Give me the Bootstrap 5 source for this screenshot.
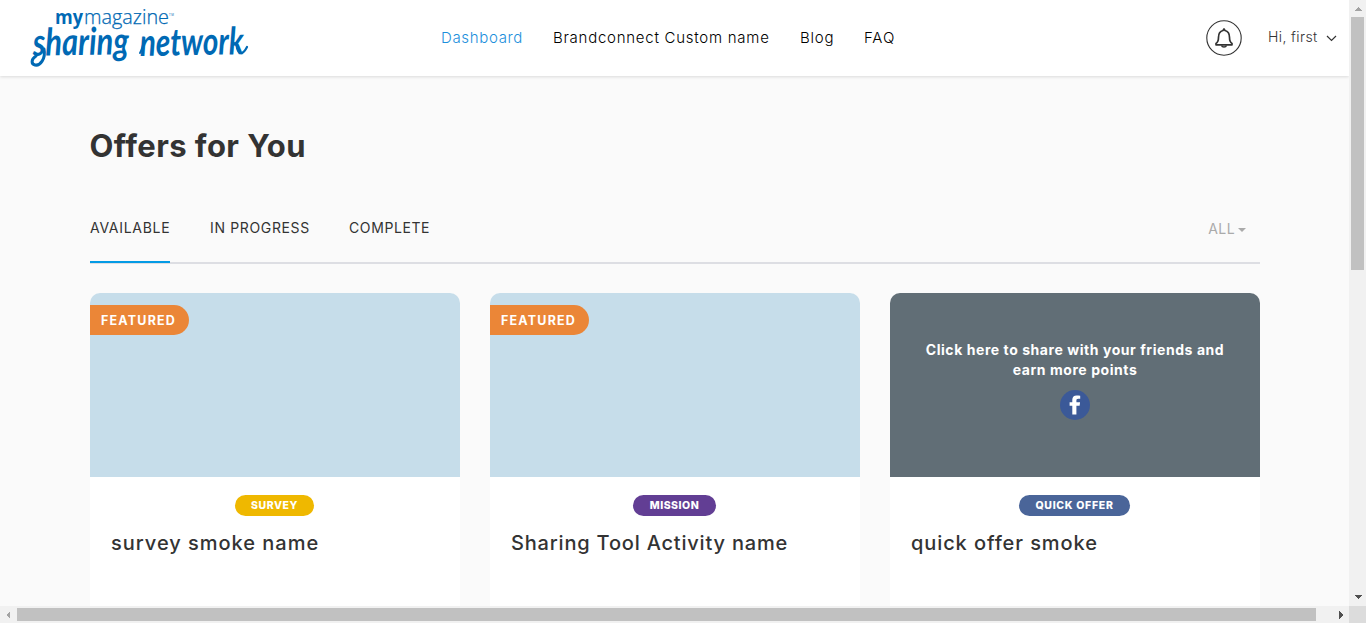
<!DOCTYPE html>
<html lang="en">
<head>
<meta charset="utf-8">
<meta name="viewport" content="width=device-width, initial-scale=1">
<title>Sharing Network</title>
<link href="https://cdn.jsdelivr.net/npm/bootstrap@5.3.0/dist/css/bootstrap.min.css" rel="stylesheet">
<style>
body { font-family: Inter, "Open Sans", sans-serif; color: #333; }
a { color: inherit; text-decoration: none; }
.window-grid { display: grid; grid-template: 606px 17px / 1349px 17px; width: 1366px; height: 623px; overflow: hidden; }
.page { background: #fafafa; }
.topbar { height: 76px; padding: 0; box-shadow: 0 1px 3px rgba(0,0,0,.13); z-index: 1; }
.logo { margin-left: 24px; width: 230px; height: 76px; }
.main-nav { margin-left: 187px; font-size: 15px; font-weight: 300; color: #000; line-height: 20px; }
.main-nav a { white-space: nowrap; }
.n1 { width: 112px; letter-spacing: .66px; color: #1c8fdc; }
.n2 { width: 247px; letter-spacing: .74px; }
.n3 { width: 64px; letter-spacing: .75px; }
.n4 { width: 40px; letter-spacing: .9px; }
.bell { margin-left: 302px; }
.user { margin-left: 26px; font-size: 14px; font-weight: 300; letter-spacing: .4px; line-height: 20px; width: 58px; white-space: nowrap; margin-top: -2px; }
.wrap { width: 1170px; margin-left: 90px; }
h1 { font-size: 31px; font-weight: 700; line-height: 40px; margin: 50px 0 0 -.5px; letter-spacing: .42px; }
.tabs { margin-top: 42px; height: 56px; border-bottom: 2px solid #dddee3; font-size: 14px; line-height: 20px; }
.tab { height: 55px; padding-top: 10px; white-space: nowrap; margin-right: 40px; }
.tab.active { border-bottom: 2px solid #039be5; width: 80px; letter-spacing: .72px; }
.progress-tab { width: 99px; letter-spacing: .65px; }
.complete-tab { letter-spacing: .6px; }
.filter { margin: 11px 14px 0 auto; color: #aaa; letter-spacing: .4px; }
.filter::after { content: ""; display: inline-block; border: 4px solid transparent; border-top-color: #aaa; border-bottom: 0; margin-left: 3px; vertical-align: 2px; }
.offers { display: grid; grid-template-columns: repeat(3, 370px); gap: 30px; margin-top: 29px; }
.offer { height: 313px; background: #fff; border-radius: 10px 10px 0 0; overflow: hidden; }
.cover { height: 184px; background: #c6ddea; padding-top: 12px; }
.cover.share { background: #616e76; color: #fff; padding-top: 47px; font-size: 14px; font-weight: 700; line-height: 20px; letter-spacing: .56px; }
.share-icon { margin-top: 10px; }
.featured { display: block; width: 99px; height: 30px; line-height: 31px; padding-left: 11px; background: #eb8637; color: #fff; border-radius: 0 15px 15px 0; font-size: 12.5px; font-weight: 700; letter-spacing: 1.2px; }
.kind { display: block; height: 21px; line-height: 21px; margin: 18px auto 0; border-radius: 11px; color: #fff; font-size: 10.5px; font-weight: 800; text-align: center; position: relative; left: -.5px; }
.survey { background: #efb800; width: 79px; letter-spacing: .55px; }
.mission { background: #623e94; width: 83px; letter-spacing: .5px; }
.quick { background: #4a6599; width: 111px; letter-spacing: .7px; }
.offer h2 { font-size: 20px; font-weight: 500; line-height: 26px; margin: 14px 0 0 21px; white-space: nowrap; }
.t1 { letter-spacing: .98px; }
.t2 { letter-spacing: .81px; }
.t3 { letter-spacing: .91px; }
.bars { background: #f1f1f1; }
.thumb-bar { fill: #c1c1c1; }
.corner { background: #dcdcdc; }
</style>
</head>
<body>
<div class="window-grid">
  <div class="page overflow-hidden">
    <header class="topbar bg-white d-flex align-items-center position-relative">
      <svg class="logo" viewBox="24 0 230 76" fill="#0069b4">
        <g font-family="Open Sans, sans-serif" font-size="19.500">
          <text x="55" y="23.500" font-weight="700" textLength="28" lengthAdjust="spacingAndGlyphs">my</text>
          <text x="84" y="23.500" font-weight="300" stroke="#0069b4" stroke-width=".25" textLength="85" lengthAdjust="spacingAndGlyphs">magazine</text>
          <text x="169" y="15.500" font-size="3" textLength="5">TM</text>
        </g>
        <g font-family="Lato, sans-serif" font-style="italic" font-weight="700" font-size="38">
          <text x="33" y="55" textLength="96" lengthAdjust="spacingAndGlyphs" transform="rotate(-1 80 54)">sharing</text>
          <text x="140" y="55" textLength="104" lengthAdjust="spacingAndGlyphs" transform="rotate(-1 195 54)">network</text>
        </g>
        <g fill="none" stroke="#0069b4" stroke-width="3" stroke-linecap="round">
          <path d="M44 49c2 10-4 17-9 16-4-1-4-6 1-9"/>
          <path d="M237 48c2 7 6 7 10-1" stroke-width="2.200"/>
          <path d="M140 53c2-3 3-7 4-13" stroke-width="2"/>
        </g>
      </svg>
      <nav class="main-nav d-flex">
        <a class="n1" href="#">Dashboard</a><a class="n2" href="#">Brandconnect Custom name</a><a class="n3" href="#">Blog</a><a class="n4" href="#">FAQ</a>
      </nav>
      <svg class="bell" width="36" height="36" viewBox="0 0 36 36" fill="none" stroke="#333">
        <circle cx="18" cy="18" r="17.200" stroke-width="1.100"/>
        <path d="M10 24.800v-1.300c2.200-1.300 2.500-3 2.500-6.200c0-4 1.800-6.200 4.500-6.800l1-1.500 1 1.500c2.700.6 4.500 2.800 4.500 6.800c0 3.200.3 4.900 2.500 6.200v1.300z" stroke-width="1.700" stroke-linejoin="round"/>
        <path d="M15.500 25.500a2.600 2 0 0 0 5 0" stroke-width="1.500"/>
      </svg>
      <a class="user" href="#">Hi, first</a>
      <svg width="11" height="8" viewBox="0 0 11 8" fill="none" stroke="#333" stroke-width="1.200"><path d="M1 2l4.500 4.500L10 2"/></svg>
    </header>
    <main class="wrap">
      <h1>Offers for You</h1>
      <div class="tabs d-flex">
        <a class="tab active" href="#">AVAILABLE</a>
        <a class="tab progress-tab" href="#">IN PROGRESS</a>
        <a class="tab complete-tab" href="#">COMPLETE</a>
        <a class="filter" href="#">ALL</a>
      </div>
      <section class="offers">
        <article class="offer">
          <div class="cover"><span class="featured">FEATURED</span></div>
          <span class="kind survey">SURVEY</span>
          <h2 class="t1">survey smoke name</h2>
        </article>
        <article class="offer">
          <div class="cover"><span class="featured">FEATURED</span></div>
          <span class="kind mission">MISSION</span>
          <h2 class="t2">Sharing Tool Activity name</h2>
        </article>
        <article class="offer">
          <div class="cover share text-center">Click here to share with your friends and<br>earn more points
            <svg class="share-icon d-block mx-auto" width="30" height="30" viewBox="0 0 30 30"><circle cx="15" cy="15" r="15" fill="#3b5998"/><path fill="#fff" d="M12.300 24.600v-8.900H9.600v-3.500h2.700V9.800c0-2.900 1.700-4.300 4.300-4.300 1.200 0 2.400.1 3.600.2v3.100h-1.900c-1.500 0-1.900.7-1.900 1.700v1.700h3.700l-.5 3.500h-3.200v8.900z"/></svg>
          </div>
          <span class="kind quick">QUICK OFFER</span>
          <h2 class="t3">quick offer smoke</h2>
        </article>
      </section>
    </main>
  </div>
  <svg class="bars" width="17" height="606" shape-rendering="crispEdges"><path d="M5 11h8L9 7z" fill="#a3a3a3"/><rect class="thumb-bar" x="2" y="17" width="13" height="253"/><path d="M5 595h8l-4 4z" fill="#505050"/></svg>
  <svg class="bars" width="1349" height="17" shape-rendering="crispEdges"><path d="M10 5v8L6 9z" fill="#a3a3a3"/><rect class="thumb-bar" x="17" y="2" width="1299" height="13"/><path d="M1339 5v8l4-4z" fill="#505050"/></svg>
  <div class="corner"></div>
</div>
<script src="https://cdn.jsdelivr.net/npm/bootstrap@5.3.0/dist/js/bootstrap.bundle.min.js"></script>
</body>
</html>
